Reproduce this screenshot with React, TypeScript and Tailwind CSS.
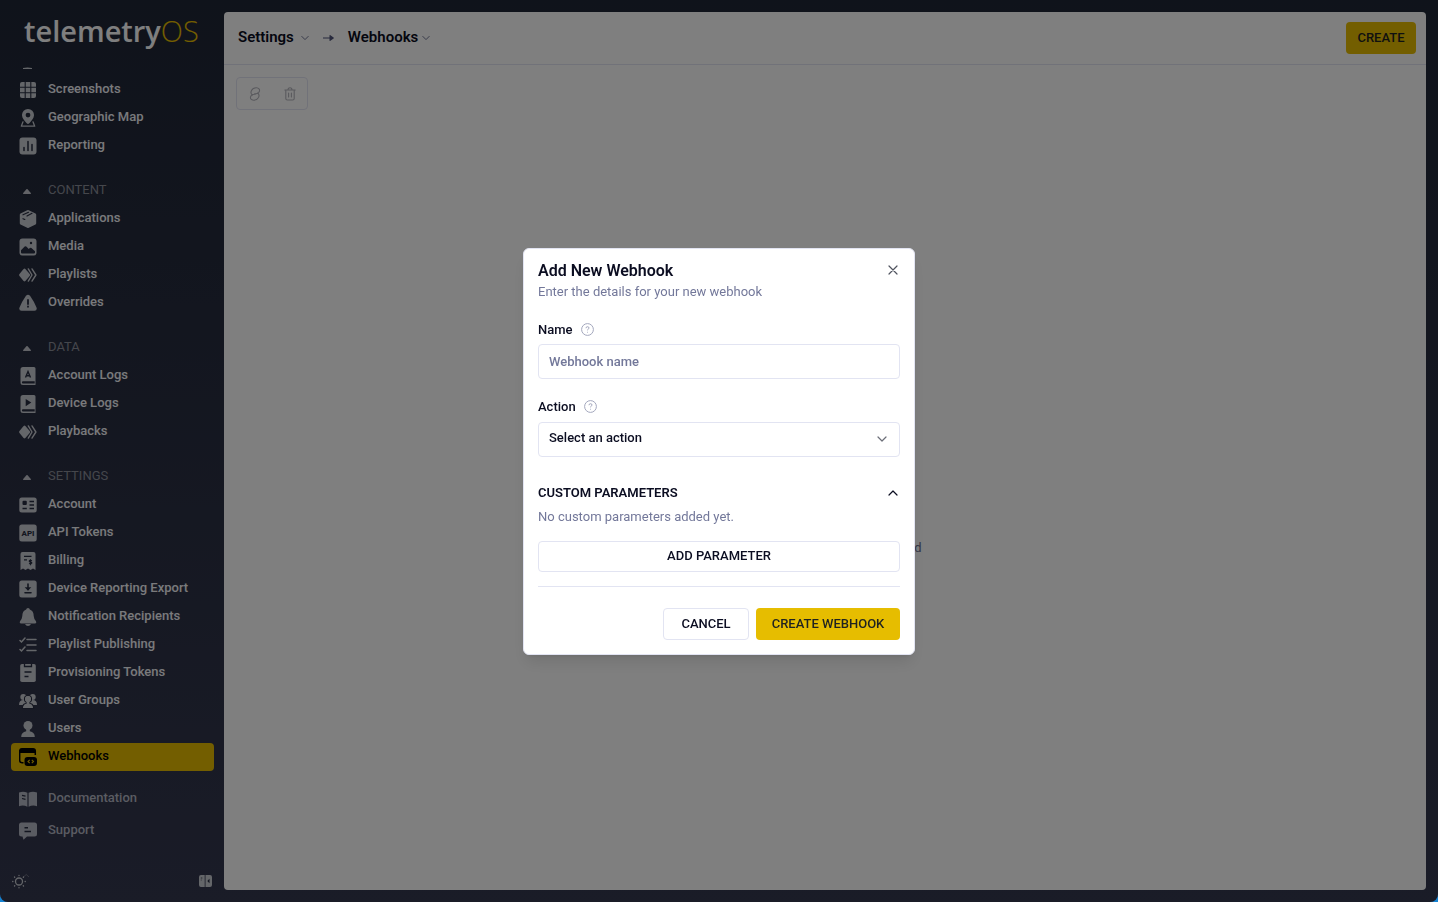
import type { ReactNode } from 'react'

interface NavEntry {
  label: string
  icon: ReactNode
  active?: boolean
}

interface NavGroup {
  title?: string
  items: NavEntry[]
}

// shapes punched out of the solid icons use the sidebar colour
const CUT = '#272d40'

function Glyph({ children }: { children: ReactNode }) {
  return (
    <svg className="w-[18px] h-[18px] shrink-0" viewBox="0 0 18 18" fill="currentColor" aria-hidden="true">
      {children}
    </svg>
  )
}

const playIcon = (
  <Glyph>
    <path d="M4.6 2.9q.9-.8 1.8 0l4.3 5q.8 1.1 0 2.2l-4.3 5q-.9.8-1.8 0L.5 10.1q-.8-1.1 0-2.2z" />
    <path d="M9.3 2.9 13 9l-3.7 6.1M13 2.9 16.9 9 13 15.1" fill="none" stroke="currentColor" strokeWidth="1.4" strokeLinecap="round" strokeLinejoin="round" />
  </Glyph>
)

const groups: NavGroup[] = [
  {
    items: [
      {
        label: 'Screenshots',
        icon: (
          <Glyph>
            <rect x="1" y="1" width="16" height="16" rx="2" />
            <path d="M6.2 0v18M11.8 0v18M0 6.2h18M0 11.8h18" stroke={CUT} strokeWidth="1.1" />
          </Glyph>
        )
      },
      {
        label: 'Geographic Map',
        icon: (
          <Glyph>
            <path fillRule="evenodd" d="M9 0a6 6 0 0 1 6 6.2c0 3-2.8 5.5-4.7 8.1q-1.3 1.3-2.6 0C5.8 11.7 3 9.2 3 6.2A6 6 0 0 1 9 0zm0 3.7a2.4 2.4 0 1 0 0 4.8 2.4 2.4 0 0 0 0-4.8z" />
            <path d="M4 12.8 2.3 17.2h13.4L14 12.8" fill="none" stroke="currentColor" strokeWidth="1.3" strokeLinejoin="round" strokeLinecap="round" />
          </Glyph>
        )
      },
      {
        label: 'Reporting',
        icon: (
          <Glyph>
            <rect x="0.5" y="0.5" width="17" height="17" rx="3" />
            <path d="M5 10.5v3M9 4.5v9M13 7.5v6" stroke={CUT} strokeWidth="1.5" strokeLinecap="round" />
          </Glyph>
        )
      }
    ]
  },
  {
    title: 'CONTENT',
    items: [
      {
        label: 'Applications',
        icon: (
          <Glyph>
            <path d="M8.2.3q.8-.4 1.6 0l6.7 3.2q.7.4.7 1.2v8.5q0 .8-.7 1.2l-6.7 3.3q-.8.4-1.6 0l-6.7-3.3q-.7-.4-.7-1.2V4.7q0-.8.7-1.2z" />
            <path d="m4 4.8 5.5-2.5M8 6l5-2.700M4 8.7l1.8.8" stroke={CUT} strokeWidth="1.2" strokeLinecap="round" fill="none" />
          </Glyph>
        )
      },
      {
        label: 'Media',
        icon: (
          <Glyph>
            <rect x="0.5" y="0.5" width="17" height="17" rx="3" />
            <path d="M2 14.5v-2.3L5.7 8.5q.8-.7 1.6 0l2.5 2.6 1-1q.8-.6 1.6 0l3.6 3.2v1.2q0 1-1 1H3q-1 0-1-1z" fill={CUT} />
            <circle cx="12" cy="5" r="1.2" fill={CUT} />
          </Glyph>
        )
      },
      { label: 'Playlists', icon: playIcon },
      {
        label: 'Overrides',
        icon: (
          <Glyph>
            <path d="M7 1.8q2-2.3 4 0 4 5.7 6.500 11.700.9 3-2 3.300H2.500q-2.900-.3-2-3.300Q3 7.500 7 1.800z" />
            <path d="M9 6v4M9 12.3v.5" stroke={CUT} strokeWidth="1.8" strokeLinecap="round" />
          </Glyph>
        )
      }
    ]
  },
  {
    title: 'DATA',
    items: [
      {
        label: 'Account Logs',
        icon: (
          <Glyph>
            <path fillRule="evenodd" d="M4 0h11q1.5 0 1.5 1.5V18H4a2.5 2.5 0 0 1-2.5-2.5v-13A2.5 2.5 0 0 1 4 0zm0 14.3a1.1 1.1 0 0 0 0 2.2h11.7v-2.2z" />
            <path d="m6.5 10.5 2.5-6 2.5 6M7.5 8.7h3" stroke={CUT} strokeWidth="1.4" fill="none" />
          </Glyph>
        )
      },
      {
        label: 'Device Logs',
        icon: (
          <Glyph>
            <path fillRule="evenodd" d="M4 0h11q1.5 0 1.5 1.5V18H4a2.5 2.5 0 0 1-2.5-2.5v-13A2.5 2.5 0 0 1 4 0zm0 14.3a1.1 1.1 0 0 0 0 2.2h11.7v-2.2z" />
            <path d="M6.7 4v7.2l5.6-3.6z" fill={CUT} />
          </Glyph>
        )
      },
      { label: 'Playbacks', icon: playIcon }
    ]
  },
  {
    title: 'SETTINGS',
    items: [
      {
        label: 'Account',
        icon: (
          <Glyph>
            <rect x="0.3" y="1.5" width="17.4" height="15" rx="2.5" />
            <rect x="3.5" y="4.8" width="4.3" height="4.3" rx="1" fill={CUT} />
            <path d="M10.5 5.5H15M10.5 9H15M3.5 12.5h4.3M10.5 12.5H15" stroke={CUT} strokeWidth="1.3" />
          </Glyph>
        )
      },
      {
        label: 'API Tokens',
        icon: (
          <Glyph>
            <rect x="0.3" y="0.5" width="17.4" height="17" rx="2.5" />
            <text x="9" y="12" textAnchor="middle" fill={CUT} fontSize="8" fontWeight="800" fontFamily="Roboto, sans-serif">API</text>
          </Glyph>
        )
      },
      {
        label: 'Billing',
        icon: (
          <Glyph>
            <path d="M3.5 0h11Q16.5 0 16.5 2v16l-2.5-1.5-2.5 1.5L9 16.5 6.5 18 4 16.5 1.5 18V2q0-2 2-2z" />
            <path d="M5 4.3h7.5M5 7.8h3" stroke={CUT} strokeWidth="1.3" />
            <path d="M13 8.8q-2.8-1-2.8.4 0 .8 1.3.9 1.5.2 1.3 1.1-.3 1.1-2.8.3M11.5 7.3v6" stroke={CUT} strokeWidth="1.1" fill="none" />
          </Glyph>
        )
      },
      {
        label: 'Device Reporting Export',
        icon: (
          <Glyph>
            <rect x="0.3" y="0.5" width="17.4" height="17" rx="2.5" />
            <path d="M9 4v5.5M6 12.8h6" stroke={CUT} strokeWidth="1.6" strokeLinecap="round" />
            <path d="M5.7 7.3h6.6L9 10.8z" fill={CUT} />
          </Glyph>
        )
      },
      {
        label: 'Notification Recipients',
        icon: (
          <Glyph>
            <path d="M9 0q1.7 0 1.8 1.6Q14.7 3 14.7 8q.2 3.2 2.3 5.2.9 2-.7 2.3H1.7q-1.6-.3-.7-2.3 2.1-2 2.3-5.2 0-5 3.9-6.4Q7.3 0 9 0zM6 16h6q-1 2-3 2t-3-2z" />
          </Glyph>
        )
      },
      {
        label: 'Playlist Publishing',
        icon: (
          <Glyph>
            <path d="M8 3.5h9M8 9h9M8 14.5h9M1 4.5l1.500 1.500L6 2M1 13.5 2.500 15 6 11" fill="none" stroke="currentColor" strokeWidth="1.5" strokeLinecap="round" />
          </Glyph>
        )
      },
      {
        label: 'Provisioning Tokens',
        icon: (
          <Glyph>
            <path d="M3 0h12q1.8 0 1.8 1.8v14.4Q16.8 18 15 18H3q-1.8 0-1.8-1.8V1.8Q1.2 0 3 0z" />
            <path d="M5.5 0v2.5h7V0M5.5 8h7M5.5 12.5h4" stroke={CUT} strokeWidth="1.3" fill="none" />
          </Glyph>
        )
      },
      {
        label: 'User Groups',
        icon: (
          <Glyph>
            <circle cx="4.3" cy="5" r="3" />
            <circle cx="13.7" cy="5" r="3" />
            <path d="M0 13q0-5 4.5-5h9q4.5 0 4.500 5z" />
            <circle cx="9" cy="7" r="3.5" stroke={CUT} strokeWidth="1.2" />
            <path d="M3.3 16.5q0-5.5 5.7-5.5t5.7 5.5z" stroke={CUT} strokeWidth="1.2" />
            <circle cx="9" cy="7" r="3" />
            <path d="M7.7 9h2.6v3H7.7z" />
          </Glyph>
        )
      },
      {
        label: 'Users',
        icon: (
          <Glyph>
            <circle cx="9" cy="5.5" r="4.5" />
            <path d="M7.2 9h3.6v2.3q5 1 5 5.7H2.2q0-4.7 5-5.7z" />
          </Glyph>
        )
      },
      {
        label: 'Webhooks',
        active: true,
        icon: (
          <svg className="w-[18px] h-[18px] shrink-0" viewBox="0 0 18 18" aria-hidden="true">
            <path d="M4.5 14.7H3Q.7 14.7.7 12.5V3Q.7.8 3 .8h11q2.3 0 2.3 2.2v4" fill="none" stroke="#000" strokeWidth="1.5" />
            <path d="M.7 3Q.7.5 3 .5h11q2.3 0 2.3 2.5v2H.7z" />
            <rect x="5.5" y="9" width="12.5" height="9" rx="3" />
            <path d="m10.7 11.8-1.7 1.7 1.7 1.7M12.8 11.8l1.7 1.7-1.7 1.7" stroke="#e6bd00" strokeWidth="1.1" fill="none" />
          </svg>
        )
      }
    ]
  }
]

const footerLinks: NavEntry[] = [
  {
    label: 'Documentation',
    icon: (
      <Glyph>
        <path d="M0 2.5q4.5-1.7 8.4.3v14q-3.9-2-8.4-.6zM18 2.5q-4.5-1.7-8.4.3v14q3.9-2 8.4-.6z" />
        <path d="m3 5.3 3.5.8M3 8.5l3.5.8" stroke={CUT} strokeWidth="1.2" />
      </Glyph>
    )
  },
  {
    label: 'Support',
    icon: (
      <Glyph>
        <path d="M2.5.5h13q2.5 0 2.5 2.5v9q0 2.5-2.5 2.5H8L4.5 17.8 3.5 14.5h-1Q0 14.5 0 12V3Q0 .5 2.5.5z" />
        <path d="M5.5 5.8H9M5.5 9.5h6.5" stroke={CUT} strokeWidth="1.4" />
      </Glyph>
    )
  }
]

function Chevron({ className, up }: { className: string; up?: boolean }) {
  return (
    <svg className={className} viewBox="0 0 10 10" fill="none" stroke="currentColor" strokeWidth="1.2" strokeLinecap="round" strokeLinejoin="round" aria-hidden="true">
      <path d={up ? 'M1 7l4-4 4 4' : 'M1 3l4 4 4-4'} />
    </svg>
  )
}

function HelpIcon() {
  return (
    <svg className="w-[13px] h-[13px] text-[#a3a7bd]" viewBox="0 0 13 13" fill="none" stroke="currentColor" aria-hidden="true">
      <circle cx="6.5" cy="6.5" r="5.9" />
      <path d="M5 5.2q0-1.5 1.5-1.5T8 5q0 .8-.9 1.2-.6.3-.6 1.100M6.5 8.8v.8" />
    </svg>
  )
}

function Sidebar() {
  return (
    <aside className="w-56 shrink-0 flex flex-col pl-[11px] pr-[10px]">
      <div className="h-[67px] pl-[13px] pt-2.5 text-[29px] leading-[42px] font-['Open_Sans',sans-serif] font-semibold text-white">
        telemetry<span className="font-light text-[#e6bd00]">OS</span>
      </div>

      <nav className="text-[#f3f4f8]">
        <svg className="block w-[9px] h-[9px] ml-3 text-[#c9ccd3]" viewBox="0 0 9 9" aria-hidden="true">
          <path d="M0 2V1q4.5-1.2 9 0v1z" fill="currentColor" />
        </svg>
        {groups.map((group, index) => (
          <div key={index} className={group.title ? 'mt-[17px]' : ''}>
            {group.title && (
              <button type="button" className="h-7 w-full flex items-center gap-[17px] pl-3 text-[13px] leading-4 text-[#8b8e99]">
                <svg className="w-2 h-[5px] text-[#c4c7cf]" viewBox="0 0 8 5" fill="currentColor" aria-hidden="true">
                  <path d="M3.4.3q.6-.5 1.2 0L7.8 4q.4 1-.6 1H.8q-1 0-.6-1z" />
                </svg>
                <span className="pb-0.5">{group.title}</span>
              </button>
            )}
            {group.items.map((item) => (
              <a
                key={item.label}
                href="#"
                className={`h-7 flex items-center gap-[11px] pl-2 rounded text-[13px] leading-4 font-medium ${item.active ? 'bg-[#e6bd00] text-black' : ''}`}
              >
                <span className={item.active ? '' : 'text-[#c9ccd3]'}>{item.icon}</span>
                <span className="pb-0.5">{item.label}</span>
              </a>
            ))}
          </div>
        ))}
      </nav>

      <div className="mt-3 text-[#b5b8c4]">
        {footerLinks.map((item) => (
          <a key={item.label} href="#" className="h-8 flex items-center gap-[11px] pl-2 text-[13px] leading-4 font-medium">
            {item.icon}
            <span className="pb-0.5">{item.label}</span>
          </a>
        ))}
      </div>

      <div className="mt-auto mb-[13px] flex items-center justify-between pr-0.5">
        <button type="button" aria-label="Theme" className="text-[#c9ccd3]">
          <svg className="w-[18px] h-4" viewBox="0 0 18 16" fill="none" stroke="currentColor" strokeLinecap="round">
            <circle cx="8" cy="8.5" r="3.5" strokeWidth="1.3" />
            <path d="M8 2.3v.2M8 14.6v.2M1.7 8.5h.2M14.1 8.5h.2M3.5 4l.2.2M12.3 12.8l.2.2M3.5 13l.2-.2M12.3 4.2l.2-.2" strokeWidth="1.3" />
            <path d="m12.5 4 2.7-2.5L18 4" strokeWidth="0.6" opacity="0.6" />
          </svg>
        </button>
        <button type="button" aria-label="Collapse sidebar" className="text-[#c9ccd3]">
          <svg className="w-[13px] h-3" viewBox="0 0 13 12" fill="currentColor">
            <path d="M2 0h3.7v12H2Q0 12 0 10V2Q0 0 2 0zM6.5 0H11q2 0 2 2v8q0 2-2 2H6.5z" />
            <path d="M1.8 3h1.5M1.8 5h.8" stroke={CUT} strokeWidth="0.8" />
            <path d="M10.5 3.8 8.3 6l2.2 2.2z" fill={CUT} />
          </svg>
        </button>
      </div>
    </aside>
  )
}

function WebhooksPage() {
  return (
    <main className="flex-1 min-w-0 mt-3 mr-3 mb-3 rounded bg-white flex flex-col">
      <header className="h-[53px] shrink-0 flex items-center justify-between pl-[14px] pr-[10px] border-b border-[#e2e4f2]">
        <div className="flex items-center pb-0.5 text-[15px] leading-5 font-semibold text-[#0b0d21]">
          <button type="button" className="flex items-center gap-[7px]">
            Settings
            <Chevron className="w-2 h-2 mt-0.5 text-[#6b7190]" />
          </button>
          <svg className="w-[11px] h-2 mx-[14px] mt-0.5 text-[#50557a]" viewBox="0 0 11 8" fill="currentColor" aria-hidden="true">
            <path d="M0 3.4h6.5V1.5q0-.7.6-.4l3.500 2.500q.5.400 0 .8L7.100 6.900q-.6.300-.6-.4V4.600H0z" />
          </svg>
          <button type="button" className="flex items-center gap-1">
            Webhooks
            <Chevron className="w-2 h-2 mt-0.5 text-[#6b7190]" />
          </button>
        </div>
        <button type="button" className="h-8 w-[70px] rounded bg-[#e6bd00] text-[13px] font-medium text-[#1f2321]">
          CREATE
        </button>
      </header>

      <div className="ml-3 mt-3 w-[72px] h-[33px] flex items-center justify-around rounded border border-[#e2e4f2] text-[#b4b4bc]">
        <button type="button" aria-label="Copy link">
          <svg className="block w-3 h-[14px]" viewBox="0 0 12 14" fill="none" stroke="currentColor" strokeWidth="1.1" strokeLinecap="round">
            <path d="M3.5 8Q1 6.5 2.5 3.5 4 .7 7.5.8q3.5.5 3 3.2Q10 6.5 7 6.8L5.5 7" />
            <path d="M8.5 6Q11 7.5 9.5 10.5 8 13.3 4.5 13.2 1 12.7 1.5 10 2 7.5 5 7.2L6.5 7" />
          </svg>
        </button>
        <button type="button" aria-label="Delete">
          <svg className="block w-3 h-[14px]" viewBox="0 0 12 14" fill="none" stroke="currentColor" strokeWidth="1.1" strokeLinecap="round">
            <path d="M.8 3h10.4M1.8 3v8.5q0 1.5 1.5 1.5h5.4q1.5 0 1.5-1.5V3M4 3q0-2.2 2-2.2T8 3M4.6 6v4M7.4 6v4" />
          </svg>
        </button>
      </div>

      <div className="flex-1 flex items-center justify-center pt-24 text-[13px] text-[#6b7190]">
        No webhooks have been installed
      </div>
    </main>
  )
}

function AddWebhookDialog() {
  return (
    <div className="fixed inset-0 flex items-center justify-center rounded-b-lg bg-black/50">
      <form
        role="dialog"
        aria-labelledby="dialog-title"
        className="w-[392px] px-[14px] pt-3 pb-[14px] rounded-md bg-white border border-[#e2e4f2] shadow-lg text-[#0b0d21]"
      >
        <div className="flex justify-between">
          <h2 id="dialog-title" className="text-base leading-5 font-semibold">Add New Webhook</h2>
          <button type="button" aria-label="Close" className="w-[14px] h-[18px] flex items-center justify-center text-[#50545f]">
            <svg className="w-[10px] h-[10px]" viewBox="0 0 10 10" stroke="currentColor" strokeWidth="1.2" strokeLinecap="round">
              <path d="m1 1 8 8M9 1 1 9" />
            </svg>
          </button>
        </div>
        <p className="mt-px text-[13px] leading-5 text-[#73789a]">Enter the details for your new webhook</p>

        <div className="mt-5 flex items-center gap-2">
          <label htmlFor="webhook-name" className="text-[13px] leading-4 font-medium">Name</label>
          <HelpIcon />
        </div>
        <input
          id="webhook-name"
          type="text"
          placeholder="Webhook name"
          className="mt-1.5 w-full h-[35px] px-[10px] rounded border border-[#e2e4f2] text-[13px] font-medium placeholder:text-[#73789a]"
        />

        <div className="mt-5 flex items-center gap-2">
          <label htmlFor="webhook-action" className="text-[13px] leading-4 font-medium">Action</label>
          <HelpIcon />
        </div>
        <div className="mt-[7px] grid items-center">
          <select
            id="webhook-action"
            className="col-start-1 row-start-1 appearance-none w-full h-[35px] pl-[10px] pr-8 pb-[3px] rounded border border-[#e2e4f2] text-[13px] font-medium"
          >
            <option>Select an action</option>
          </select>
          <Chevron className="col-start-1 row-start-1 justify-self-end mr-[13px] w-[10px] h-[10px] pointer-events-none text-[#6b6e78]" />
        </div>

        <button type="button" className="mt-[26px] w-full flex items-center justify-between pr-0.5 text-[13px] leading-5 font-semibold">
          CUSTOM PARAMETERS
          <Chevron up className="w-[10px] h-[10px]" />
        </button>
        <p className="mt-1 text-[13px] leading-5 text-[#73789a]">No custom parameters added yet.</p>
        <button type="button" className="mt-[14px] w-full h-[31px] pb-px rounded border border-[#e2e4f2] text-[13px] font-medium">
          ADD PARAMETER
        </button>

        <div className="mt-[14px] pt-[21px] border-t border-[#e2e4f2] flex justify-end gap-[7px]">
          <button type="button" className="h-8 w-[86px] rounded border border-[#e2e4f2] text-[13px] font-medium">
            CANCEL
          </button>
          <button type="submit" className="h-8 w-36 rounded bg-[#e6bd00] text-[13px] font-medium text-[#1f2321]">
            CREATE WEBHOOK
          </button>
        </div>
      </form>
    </div>
  )
}

export default function App() {
  return (
    <div className="bg-[#1583d3] font-[Roboto,sans-serif]">
      <div className="min-h-screen flex rounded-b-lg bg-linear-to-b from-[#1f2636] to-[#34384f]">
        <Sidebar />
        <WebhooksPage />
      </div>
      <AddWebhookDialog />
    </div>
  )
}
